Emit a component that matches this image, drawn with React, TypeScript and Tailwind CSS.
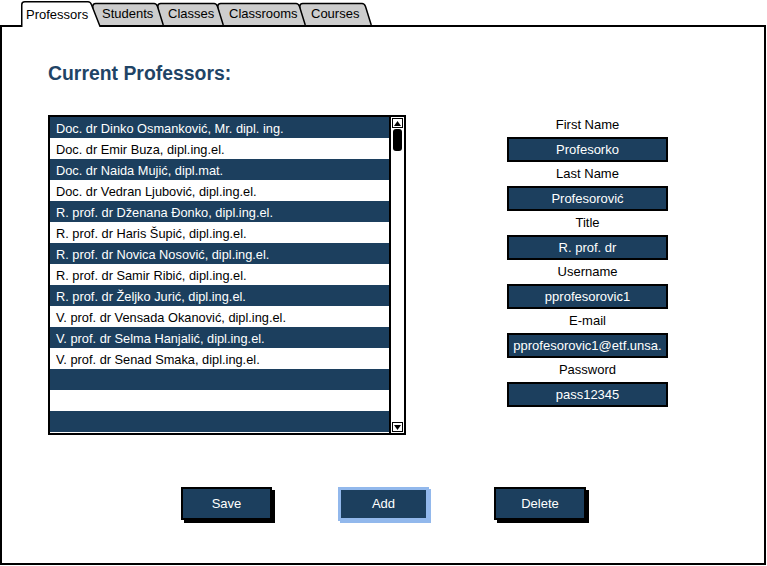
import React from "react";

const professors = [
  "Doc. dr Dinko Osmanković, Mr. dipl. ing.",
  "Doc. dr Emir Buza, dipl.ing.el.",
  "Doc. dr Naida Mujić, dipl.mat.",
  "Doc. dr Vedran Ljubović, dipl.ing.el.",
  "R. prof. dr Dženana Đonko, dipl.ing.el.",
  "R. prof. dr Haris Šupić, dipl.ing.el.",
  "R. prof. dr Novica Nosović, dipl.ing.el.",
  "R. prof. dr Samir Ribić, dipl.ing.el.",
  "R. prof. dr Željko Jurić, dipl.ing.el.",
  "V. prof. dr Vensada Okanović, dipl.ing.el.",
  "V. prof. dr Selma Hanjalić, dipl.ing.el.",
  "V. prof. dr Senad Smaka, dipl.ing.el.",
  "",
  "",
  "",
];

const fields = [
  ["First Name", "Profesorko"],
  ["Last Name", "Profesorović"],
  ["Title", "R. prof. dr"],
  ["Username", "pprofesorovic1"],
  ["E-mail", "pprofesorovic1@etf.unsa."],
  ["Password", "pass12345"],
];

function TabShape({ w, h, top, slant, active }: { w: number; h: number; top: number; slant: number; active: boolean }) {
  const d = `M0.75,${h} L0.75,${top + 3} Q0.75,${top} 3.75,${top} L${w - slant - 3},${top} Q${w - slant - 0.5},${top} ${w - slant + 0.5},${top + 3} L${w - 0.75},${h}`;
  return (
    <svg className="absolute left-0 top-0" width={w} height={h} viewBox={`0 0 ${w} ${h}`}>
      <path d={d} fill={active ? "#ffffff" : "#cdcdcd"} stroke="#000" strokeWidth={1.5} strokeLinejoin="round" />
    </svg>
  );
}

function Tab({
  label,
  w,
  active,
  className,
  textClass,
}: {
  label: string;
  w: number;
  active?: boolean;
  className: string;
  textClass: string;
}) {
  const h = active ? 27 : 25;
  return (
    <div className={`relative shrink-0 ${className}`} style={{ width: w, height: h }}>
      <TabShape w={w} h={h} top={active ? 1.75 : 3.5} slant={active ? 10 : 7} active={!!active} />
      <span className={`relative block text-[13px] leading-none text-black ${textClass}`}>{label}</span>
    </div>
  );
}

export default function App() {
  return (
    <div
      className="w-[767px] h-[566px] bg-white overflow-hidden"
      style={{ fontFamily: '"Liberation Sans", Arial, sans-serif' }}
    >
      {/* tabs */}
      <div className="relative z-10 flex h-[25px] items-start">
        <Tab label="Professors" w={80} active className="ml-[21px] z-50" textClass="pl-[5px] pt-[8px]" />
        <Tab label="Students" w={72} className="-ml-[9px] z-40" textClass="pl-[10px] pt-[7px]" />
        <Tab label="Classes" w={67} className="-ml-[7px] z-30" textClass="pl-[11px] pt-[7px]" />
        <Tab label="Classrooms" w={89} className="-ml-[7px] z-20" textClass="pl-[12px] pt-[7px]" />
        <Tab label="Courses" w={73} className="-ml-[7px] z-10" textClass="pl-[12px] pt-[7px]" />
      </div>

      {/* panel */}
      <div className="w-[766px] h-[540px] border-2 border-black bg-white flex flex-col">
        <div className="flex items-start">
          {/* left column */}
          <div className="pl-[46px] pt-[34px] flex flex-col">
            <h1 className="text-[19.4px] leading-[24px] font-bold text-[#1f4466]">Current Professors:</h1>
            <div className="mt-[30px] w-[358px] h-[320px] border-2 border-black flex bg-white">
              <div className="flex-1 flex flex-col">
                {professors.map((p, i) => (
                  <div
                    key={i}
                    className={`h-[21px] shrink-0 pl-[6px] pt-[1px] text-[12.8px] leading-[21px] whitespace-nowrap ${
                      i % 2 === 0 ? "bg-[#1c3f5e] text-white" : "bg-white text-black"
                    }`}
                  >
                    {p}
                  </div>
                ))}
              </div>
              <div className="w-[15px] border-l-2 border-black bg-white flex flex-col items-center">
                <div className="mt-[1px] w-[11px] h-[10px] border border-black flex items-center justify-center">
                  <svg width="7" height="5" viewBox="0 0 7 5">
                    <path d="M0,5 L3.5,0 L7,5 Z" fill="#000" />
                  </svg>
                </div>
                <div className="mt-[1px] w-[9px] h-[22px] rounded-[3px] bg-black" />
                <div className="flex-1" />
                <div className="mb-[1px] w-[11px] h-[10px] border border-black flex items-center justify-center">
                  <svg width="7" height="5" viewBox="0 0 7 5">
                    <path d="M0,0 L7,0 L3.5,5 Z" fill="#000" />
                  </svg>
                </div>
              </div>
            </div>
          </div>

          {/* right column form */}
          <div className="ml-[101px] pt-[86px] w-[161px] flex flex-col">
            {fields.map(([label, value]) => (
              <div key={label} className="flex flex-col">
                <div className="h-[24px] text-center text-[13px] leading-[24px] text-black">{label}</div>
                <div className="h-[25px] border-2 border-black bg-[#1c3f5e] text-white text-[13px] leading-[21px] text-center whitespace-nowrap overflow-hidden">
                  {value}
                </div>
              </div>
            ))}
          </div>
        </div>

        {/* buttons */}
        <div className="mt-[52px] ml-[179px] flex items-start">
          <button className="w-[91px] h-[33px] border-2 border-black bg-[#1c3f5e] text-white text-[13px] shadow-[3px_3px_0_#000]">
            Save
          </button>
          <button className="ml-[66px] w-[91px] h-[34px] border-[3px] border-[#92b8ec] bg-[#1c3f5e] text-white text-[13px] shadow-[2px_2px_0_#92b8ec]">
            Add
          </button>
          <button className="ml-[65px] w-[92px] h-[33px] border-2 border-black bg-[#1c3f5e] text-white text-[13px] shadow-[3px_3px_0_#000]">
            Delete
          </button>
        </div>
      </div>
    </div>
  );
}
